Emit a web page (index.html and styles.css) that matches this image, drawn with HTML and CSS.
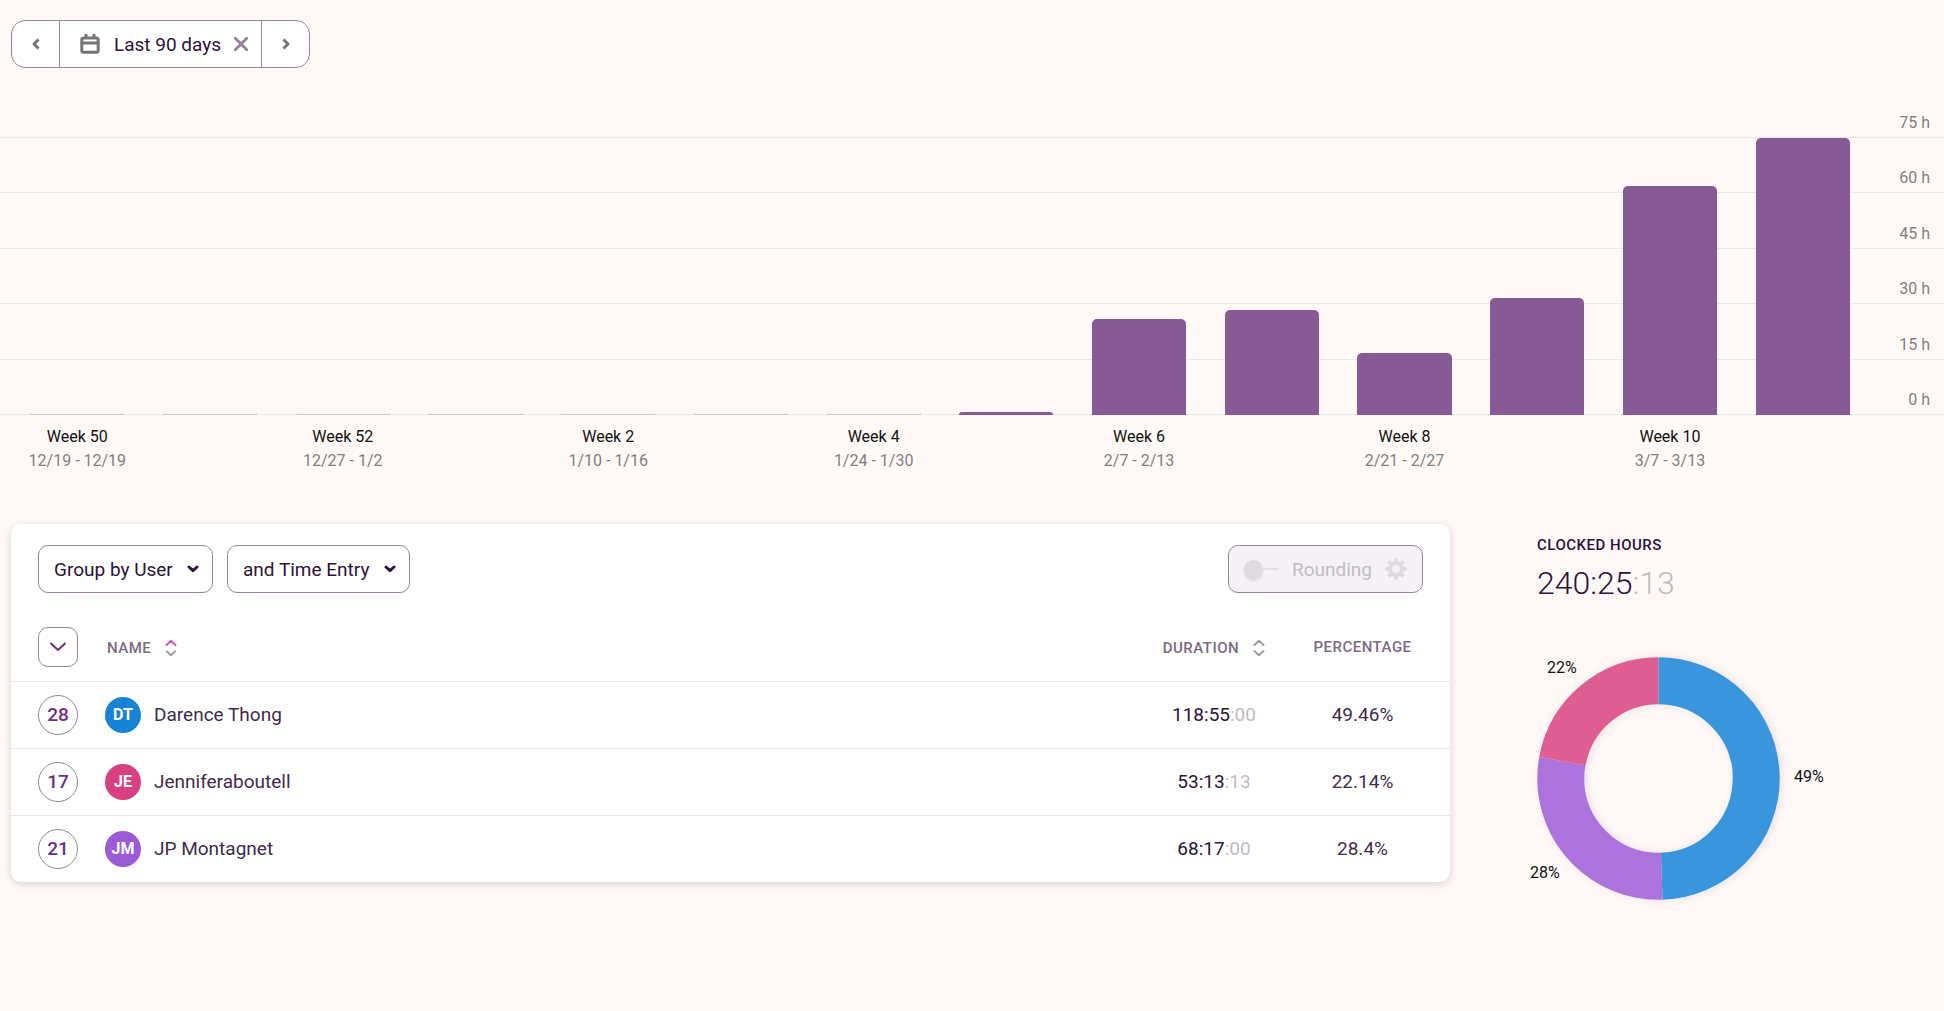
FILE: index.html
```html
<!DOCTYPE html>
<html lang="en">
<head>
<meta charset="utf-8">
<meta name="viewport" content="width=device-width, initial-scale=1">
<title>Reports</title>
<link rel="stylesheet" href="styles.css">
</head>
<body>
<header class="toolbar">
  <div class="range">
    <button class="range-step" type="button" aria-label="Previous period">
      <svg width="10" height="12" viewBox="0 0 10 12"><path d="M7.500 1.500 3 6l4.500 4.500"/></svg>
    </button>
    <div class="range-current">
      <button class="range-label" type="button">
        <svg width="20" height="20" viewBox="0 0 20 20" aria-hidden="true"><path class="calendar" d="M3.5 3.9h13a1.7 1.7 0 0 1 1.7 1.7v11a1.7 1.7 0 0 1-1.7 1.7h-13a1.7 1.7 0 0 1-1.7-1.7v-11a1.7 1.7 0 0 1 1.7-1.7zM2 9h16M6 1v3M14 1v3"/></svg>
        Last 90 days
      </button>
      <button class="range-clear" type="button" aria-label="Clear period">
        <svg width="14" height="14" viewBox="0 0 14 14"><path d="m1.3 1.3 11.4 11.4m0-11.4L1.3 12.7"/></svg>
      </button>
    </div>
    <button class="range-step" type="button" aria-label="Next period">
      <svg width="10" height="12" viewBox="0 0 10 12"><path d="M2.500 1.500 7 6l-4.500 4.500"/></svg>
    </button>
  </div>
</header>

<main>
<section class="chart" aria-label="Hours per week">
  <div class="plot">
    <div class="scale">
      <div class="tick">75 h</div>
      <div class="tick">60 h</div>
      <div class="tick">45 h</div>
      <div class="tick">30 h</div>
      <div class="tick">15 h</div>
      <div class="tick">0 h</div>
    </div>
    <div class="weeks bars">
      <div class="bar empty"></div>
      <div class="bar empty"></div>
      <div class="bar empty"></div>
      <div class="bar empty"></div>
      <div class="bar empty"></div>
      <div class="bar empty"></div>
      <div class="bar empty"></div>
      <div class="bar" style="height:1%"></div>
      <div class="bar" style="height:34.6%"></div>
      <div class="bar" style="height:37.8%"></div>
      <div class="bar" style="height:22.3%"></div>
      <div class="bar" style="height:42.2%"></div>
      <div class="bar" style="height:82.5%"></div>
      <div class="bar" style="height:99.8%"></div>
    </div>
  </div>
  <div class="weeks labels">
    <div class="week"><b>Week 50</b><span>12/19 - 12/19</span></div>
    <div class="week"><b>Week 52</b><span>12/27 - 1/2</span></div>
    <div class="week"><b>Week 2</b><span>1/10 - 1/16</span></div>
    <div class="week"><b>Week 4</b><span>1/24 - 1/30</span></div>
    <div class="week"><b>Week 6</b><span>2/7 - 2/13</span></div>
    <div class="week"><b>Week 8</b><span>2/21 - 2/27</span></div>
    <div class="week"><b>Week 10</b><span>3/7 - 3/13</span></div>
  </div>
</section>

<div class="details">
  <section class="card" aria-label="Breakdown">
    <div class="filters">
      <div class="select">
        <select aria-label="Group by"><option>Group by User</option></select>
        <svg width="12" height="8" viewBox="0 0 12 8" aria-hidden="true"><path d="m2 2 4 3.6L10 2"/></svg>
      </div>
      <div class="select">
        <select aria-label="Subgroup"><option>and Time Entry</option></select>
        <svg width="12" height="8" viewBox="0 0 12 8" aria-hidden="true"><path d="m2 2 4 3.6L10 2"/></svg>
      </div>
      <div class="rounding">
        <input type="checkbox" id="rounding" disabled>
        <label for="rounding">Rounding</label>
        <button type="button" aria-label="Rounding settings" disabled>
          <svg width="22" height="22" viewBox="0 0 22 22"><circle class="gear-body" cx="11" cy="11" r="6"/><path class="gear-teeth" d="M11 1.900v2.800M11 17.300v2.800M1.900 11h2.800M17.300 11h2.800M4.600 4.600l2 2M15.400 15.400l2 2M4.600 17.400l2-2M15.400 6.600l2-2"/></svg>
        </button>
      </div>
    </div>
    <table>
      <colgroup><col class="col-count"><col><col class="col-duration"><col class="col-percent"></colgroup>
      <thead>
        <tr>
          <th class="count"><button class="expand" type="button" aria-label="Expand all"><svg width="18" height="12" viewBox="0 0 18 12"><path d="m2 2.500 7 6.500 7-6.500"/></svg></button></th>
          <th class="name"><button class="sort" type="button">NAME <svg width="12" height="18" viewBox="0 0 12 18" aria-hidden="true"><path class="active" d="M1.500 6 6 1.800 10.500 6"/><path d="M2 12.500 6 16.200l4-3.700"/></svg></button></th>
          <th><button class="sort" type="button">DURATION <svg width="12" height="18" viewBox="0 0 12 18" aria-hidden="true"><path d="M1.500 6 6 1.800 10.500 6"/><path d="M1.500 12 6 16.200l4.500-4.200"/></svg></button></th>
          <th>PERCENTAGE</th>
        </tr>
      </thead>
      <tbody>
        <tr>
          <td class="count"><button class="badge" type="button">28</button></td>
          <td class="name"><div class="person"><span class="avatar blue">DT</span>Darence Thong</div></td>
          <td class="time">118:55<span>:00</span></td>
          <td>49.46%</td>
        </tr>
        <tr>
          <td class="count"><button class="badge" type="button">17</button></td>
          <td class="name"><div class="person"><span class="avatar pink">JE</span>Jenniferaboutell</div></td>
          <td class="time">53:13<span>:13</span></td>
          <td>22.14%</td>
        </tr>
        <tr>
          <td class="count"><button class="badge" type="button">21</button></td>
          <td class="name"><div class="person"><span class="avatar purple">JM</span>JP Montagnet</div></td>
          <td class="time">68:17<span>:00</span></td>
          <td>28.4%</td>
        </tr>
      </tbody>
    </table>
  </section>

  <aside class="summary">
    <h2>CLOCKED HOURS</h2>
    <p class="total">240:25<span>:13</span></p>
    <svg class="donut" width="243" height="243" viewBox="0 0 243 243" role="img" aria-label="Share of hours">
      <g class="ring" transform="rotate(-90 121.5 121.5)">
        <circle class="blue" cx="121.5" cy="121.5" r="97.75" pathLength="100" stroke-dasharray="49.46 50.54"/>
        <circle class="purple" cx="121.5" cy="121.5" r="97.75" pathLength="100" stroke-dasharray="28.4 71.6" stroke-dashoffset="-49.46"/>
        <circle class="pink" cx="121.5" cy="121.5" r="97.75" pathLength="100" stroke-dasharray="22.14 77.86" stroke-dashoffset="-77.86"/>
      </g>
      <text x="10" y="16">22%</text>
      <text x="257" y="125">49%</text>
      <text x="-7" y="221">28%</text>
    </svg>
  </aside>
</div>
</main>
</body>
</html>
```
FILE: styles.css
```css
* { box-sizing: border-box; }

body {
  margin: 0;
  background: #fef9f7;
  color: #2c1338;
  font-family: Roboto, "Liberation Sans", sans-serif;
  font-size: 19px;
}

button, select {
  margin: 0;
  padding: 0;
  border: 0;
  background: none;
  color: inherit;
  font: inherit;
}

svg { flex: none; fill: none; stroke-linecap: round; stroke-linejoin: round; }

/* Period picker */
.toolbar { display: flex; padding: 20px 11px 14px; }

.range {
  display: flex;
  height: 48px;
  border: 1px solid #958498;
  border-radius: 14px;
  background: #fff;
}

.range-step { width: 47px; display: flex; align-items: center; justify-content: center; }
.range-step svg { stroke: #757575; stroke-width: 3; stroke-linecap: butt; }

.range-current {
  display: flex;
  align-items: center;
  gap: 13px;
  padding: 0 13px 0 20px;
  border: solid #958498;
  border-width: 0 1px;
}

.range-label { display: flex; align-items: center; gap: 14px; }
.range-clear { display: flex; }
.range-clear svg { stroke: #958498; stroke-width: 3; }
.calendar { stroke: #757575; stroke-width: 3; }

/* Weekly chart */
.plot { display: grid; height: 333px; }
.scale, .bars { grid-area: 1 / 1; }
.scale { display: grid; grid-template-rows: repeat(6, 1fr); }

.tick {
  display: flex;
  align-items: flex-end;
  justify-content: flex-end;
  padding: 0 14px 4px 0;
  border-bottom: 1px solid #ebe7eb;
  color: #808080;
  font-size: 16px;
  line-height: 20px;
}

.weeks {
  display: grid;
  grid-template-columns: repeat(14, 1fr);
  justify-items: center;
  padding: 0 75px 0 11px;
}

.bars { align-self: end; align-items: end; height: 278px; grid-template-rows: 100%; }
.bar { width: 71%; border-radius: 5px 5px 0 0; background: #875a96; }
.bar.empty {
  height: 2px;
  border: 1px solid #dcd8dc;
  border-width: 0 1px 1px;
  border-bottom-color: #c8c5c8;
  border-radius: 0;
  background: none;
}

.labels { padding-top: 10px; font-size: 16px; line-height: 24px; }
.week { display: flex; flex-direction: column; align-items: center; color: #808080; }
.week:nth-child(n+2) { grid-row: 1; }
.week:nth-child(1) { grid-column: 1; }
.week:nth-child(2) { grid-column: 3; }
.week:nth-child(3) { grid-column: 5; }
.week:nth-child(4) { grid-column: 7; }
.week:nth-child(5) { grid-column: 9; }
.week:nth-child(6) { grid-column: 11; }
.week:nth-child(7) { grid-column: 13; }
.week b { color: #111; font-weight: 400; }

/* Breakdown card */
.details {
  display: grid;
  grid-template-columns: minmax(0, 1fr) 396px;
  align-items: start;
  gap: 87px;
  padding: 51px 11px 48px;
}

.card {
  border-radius: 10px;
  background: #fff;
  box-shadow: 0 2px 8px rgba(60, 20, 60, .18);
}

.filters { display: flex; gap: 14px; padding: 21px 27px; }

.select { display: grid; align-items: center; }
.select select, .select svg { grid-area: 1 / 1; }
.select select {
  height: 48px;
  padding: 0 39px 0 15px;
  border: 1px solid #958498;
  border-radius: 10px;
  appearance: none;
}
.select svg { justify-self: end; margin-right: 14px; stroke: #2c1338; stroke-width: 3; pointer-events: none; }

.rounding {
  display: flex;
  align-items: center;
  gap: 13px;
  height: 48px;
  margin-left: auto;
  padding: 0 15px;
  border: 1px solid #958498;
  border-radius: 10px;
  background: #f5f2f6;
  color: #c0bac4;
}

.rounding input {
  appearance: none;
  display: flex;
  align-items: center;
  width: 35px;
  height: 20px;
  margin: 0;
}
.rounding input::before {
  content: "";
  width: 19px;
  height: 19px;
  border-radius: 50%;
  background: #dfdadf;
  box-shadow: 0 2px 3px rgba(0, 0, 0, .1);
}
.rounding input::after { content: ""; flex: 1; height: 2px; background: #e3dee3; }
.rounding button { display: flex; }
.gear-body { stroke: #dfdadf; stroke-width: 4; }
.gear-teeth { stroke: #dfdadf; stroke-width: 4; }

table { width: 100%; border-collapse: collapse; table-layout: fixed; }
.col-count { width: 94px; }
.col-duration { width: 122px; }
.col-percent { width: 175px; }

th, td { height: 67px; padding: 0; text-align: center; }
tr { border-bottom: 1px solid #e8e6e8; }
tbody tr:last-child { border-bottom: 0; }
th { color: #7b6b80; font-size: 15px; font-weight: 500; letter-spacing: .5px; }
td { font-size: 19px; color: #412b4b; }
.count { padding-left: 27px; text-align: left; }
.name { text-align: left; }
th.name { padding-left: 2px; }

.expand, .badge {
  display: flex;
  align-items: center;
  justify-content: center;
  width: 40px;
  height: 40px;
  border: 1px solid #958498;
  border-radius: 10px;
}
.expand svg { stroke: #6c2f87; stroke-width: 2; }
.badge { border-radius: 50%; color: #6c2f87; font-size: 19px; font-weight: 500; }

.sort { display: inline-flex; align-items: center; gap: 14px; letter-spacing: inherit; vertical-align: middle; }
.sort svg { stroke: #a499a8; stroke-width: 2; }
.sort .active { stroke: #d157bd; }

.person { display: flex; align-items: center; gap: 13px; }
.avatar {
  width: 36px;
  height: 36px;
  border-radius: 50%;
  color: #fff;
  font-size: 16px;
  font-weight: 700;
  line-height: 36px;
  text-align: center;
}
.avatar.blue { background: #1783d7; }
.avatar.pink { background: #d84081; }
.avatar.purple { background: #9d5ad5; }

.time { color: #2c1338; }
.time span, .total span { color: #c0bac4; }

/* Totals */
.summary h2 { margin: 11px 0 0; font-size: 15px; font-weight: 500; line-height: 20px; letter-spacing: .5px; }
.total { margin: 8px 0 54px; font-size: 32px; font-weight: 300; line-height: 40px; }
.donut { display: block; overflow: visible; }
.ring { filter: drop-shadow(0 2px 4px rgba(60, 20, 60, .12)); }
.ring circle { stroke-width: 47; stroke-linecap: butt; }
.ring .blue { stroke: #3a96dc; }
.ring .purple { stroke: #ac73dc; }
.ring .pink { stroke: #de5e94; }
.donut text { fill: #111; font-size: 16px; }
```
